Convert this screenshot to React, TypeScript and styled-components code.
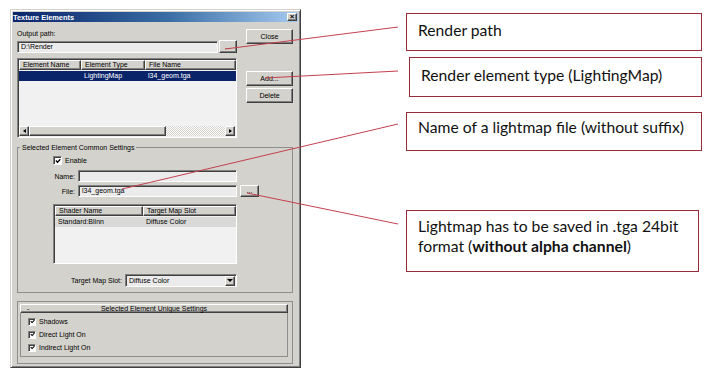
import React from "react";
import styled, { createGlobalStyle, css } from "styled-components";

const Global = createGlobalStyle`
  html, body { margin: 0; padding: 0; background: #fff; }
  body { width: 711px; height: 376px; overflow: hidden; font-family: "Liberation Sans", Arial, sans-serif; }
  *, *::before, *::after { box-sizing: border-box; }
`;

const BG = "#d4d2cc";

const raised = css`
  background: ${BG};
  border: 1px solid;
  border-color: #fff #404040 #404040 #fff;
  box-shadow: inset -1px -1px 0 #808080;
`;

const sunken = css`
  border: 1px solid;
  border-color: #808080 #fff #fff #808080;
  box-shadow: inset 1px 1px 0 #404040;
`;

const Page = styled.div`
  position: relative;
  width: 711px;
  height: 376px;
  display: flex;
  align-items: flex-start;
`;

const Dialog = styled.div`
  margin: 9px 0 0 10px;
  width: 291px;
  height: 359px;
  flex-shrink: 0;
  background: ${BG};
  border: 1px solid;
  border-color: ${BG} #404040 #404040 ${BG};
  box-shadow: inset 1px 1px 0 #fff, inset -1px -1px 0 #808080;
  padding: 2px;
  display: flex;
  flex-direction: column;
  font-size: 7px;
  color: #000;
`;

const TitleBar = styled.div`
  height: 10px;
  background: linear-gradient(90deg, #0a246a 0%, #3a6ea5 55%, #a6caf0 100%);
  color: #fff;
  font-weight: bold;
  font-size: 7.4px;
  display: flex;
  align-items: center;
  justify-content: space-between;
  padding: 0 1px 0 0;
`;

const CloseX = styled.div`
  ${raised};
  width: 10px;
  height: 8px;
  display: flex;
  align-items: center;
  justify-content: center;
  color: #000;
  font-size: 8px;
  line-height: 6px;
  font-weight: bold;
`;

const Body = styled.div`
  padding: 0 5px 0 4px;
  display: flex;
  flex-direction: column;
`;

const TopSection = styled.div`
  display: flex;
  gap: 9px;
`;

const LeftCol = styled.div`
  width: 220px;
  display: flex;
  flex-direction: column;
`;

const RightCol = styled.div`
  width: 47px;
  display: flex;
  flex-direction: column;
`;

const Label = styled.div<{ $mt?: number }>`
  margin-top: ${(p) => p.$mt ?? 0}px;
  height: 9px;
  line-height: 9px;
  white-space: nowrap;
`;

const Row = styled.div<{ $mt?: number; $h?: number }>`
  margin-top: ${(p) => p.$mt ?? 0}px;
  height: ${(p) => p.$h ?? 12}px;
  display: flex;
  align-items: center;
`;

const Field = styled.div<{ $w: number; $h?: number }>`
  ${sunken};
  width: ${(p) => p.$w}px;
  height: ${(p) => p.$h ?? 12}px;
  background: #ebebeb;
  padding-left: 3px;
  line-height: 10px;
  white-space: nowrap;
  overflow: hidden;
  flex-shrink: 0;
`;

const Button = styled.div<{ $mt?: number; $w?: number; $h?: number; $ml?: number }>`
  ${raised};
  margin-top: ${(p) => p.$mt ?? 0}px;
  margin-left: ${(p) => p.$ml ?? 0}px;
  width: ${(p) => (p.$w ? `${p.$w}px` : "100%")};
  height: ${(p) => p.$h ?? 15}px;
  display: flex;
  align-items: center;
  justify-content: center;
  flex-shrink: 0;
  line-height: 8px;
`;

const ListBox = styled.div<{ $w: number; $h: number; $mt?: number }>`
  ${sunken};
  margin-top: ${(p) => p.$mt ?? 0}px;
  width: ${(p) => p.$w}px;
  height: ${(p) => p.$h}px;
  padding: 1px 0 0 1px;
  background: #f1f1f1;
  display: flex;
  flex-direction: column;
  overflow: hidden;
  flex-shrink: 0;
`;

const HeaderRow = styled.div`
  display: flex;
  height: 10px;
  flex-shrink: 0;
`;

const HeaderCell = styled.div<{ $w?: number }>`
  ${raised};
  width: ${(p) => (p.$w ? `${p.$w}px` : "auto")};
  flex: ${(p) => (p.$w ? "0 0 auto" : "1 1 auto")};
  padding-left: 3px;
  line-height: 8px;
  white-space: nowrap;
  overflow: hidden;
`;

const ItemRow = styled.div<{ $bg?: string; $fg?: string }>`
  display: flex;
  height: 10px;
  margin-top: 1px;
  background: ${(p) => p.$bg ?? "transparent"};
  color: ${(p) => p.$fg ?? "#000"};
  flex-shrink: 0;
`;

const Cell = styled.div<{ $w?: number }>`
  width: ${(p) => (p.$w ? `${p.$w}px` : "auto")};
  flex: ${(p) => (p.$w ? "0 0 auto" : "1 1 auto")};
  padding-left: 3px;
  line-height: 10px;
  white-space: nowrap;
  overflow: hidden;
`;

const Spacer = styled.div`
  flex: 1;
`;

const ScrollBar = styled.div`
  display: flex;
  height: 10px;
  flex-shrink: 0;
  margin-right: 1px;
  margin-bottom: 1px;
`;

const ArrowBtn = styled.div`
  ${raised};
  width: 10px;
  height: 10px;
  display: flex;
  align-items: center;
  justify-content: center;
  flex-shrink: 0;
`;

const Tri = styled.div<{ $dir: "left" | "right" | "down" }>`
  width: 0;
  height: 0;
  ${(p) =>
    p.$dir === "left"
      ? css`border-top: 2.5px solid transparent; border-bottom: 2.5px solid transparent; border-right: 3px solid #000;`
      : p.$dir === "right"
      ? css`border-top: 2.5px solid transparent; border-bottom: 2.5px solid transparent; border-left: 3px solid #000;`
      : css`border-left: 3px solid transparent; border-right: 3px solid transparent; border-top: 3px solid #000;`}
`;

const Thumb = styled.div`
  ${raised};
  width: 137px;
  height: 10px;
  flex-shrink: 0;
`;

const Track = styled.div`
  flex: 1;
  height: 10px;
  background-image: conic-gradient(#fff 25%, ${BG} 0 50%, #fff 0 75%, ${BG} 0);
  background-size: 2px 2px;
`;

const Group = styled.fieldset`
  margin: 5px 0 0 0;
  padding: 0 0 5px 0;
  border: 1px solid #8e8e8e;
  min-inline-size: 0;
  width: 276px;
`;

const Legend = styled.legend`
  padding: 0 2px;
  margin-left: 2px;
  font-size: 7px;
  line-height: 9px;
  height: 9px;
`;

const GroupContent = styled.div`
  padding-left: 35px;
  display: flex;
  flex-direction: column;
`;

const CheckRow = styled.div<{ $mt?: number; $h?: number }>`
  margin-top: ${(p) => p.$mt ?? 0}px;
  height: ${(p) => p.$h ?? 9}px;
  display: flex;
  align-items: center;
  gap: 3px;
  white-space: nowrap;
`;

const CheckBox = styled.div<{ $s?: number }>`
  ${sunken};
  width: ${(p) => p.$s ?? 9}px;
  height: ${(p) => p.$s ?? 9}px;
  background: #fff;
  display: flex;
  align-items: center;
  justify-content: center;
  flex-shrink: 0;
`;

const FieldLabel = styled.div<{ $w: number }>`
  width: ${(p) => p.$w}px;
  text-align: right;
  margin-right: 3px;
  white-space: nowrap;
  flex-shrink: 0;
`;

const Combo = styled.div`
  ${sunken};
  width: 112px;
  height: 13px;
  background: #ebebeb;
  display: flex;
  align-items: center;
  padding: 0 1px 0 3px;
`;

const ComboText = styled.div`
  flex: 1;
  line-height: 10px;
  white-space: nowrap;
`;

const ComboBtn = styled.div`
  ${raised};
  width: 10px;
  height: 10px;
  display: flex;
  align-items: center;
  justify-content: center;
`;

const Rollout = styled.div`
  margin-top: 8px;
  width: 276px;
  height: 63px;
  border: 1px solid #8e8e8e;
  padding: 2px 4px 0 2px;
  display: flex;
  flex-direction: column;
`;

const RolloutHead = styled.div`
  ${raised};
  height: 9px;
  display: flex;
  align-items: center;
  line-height: 7px;
  padding: 0 6px;
`;

const RolloutSign = styled.div`
  width: 6px;
`;

const RolloutTitle = styled.div`
  flex: 1;
  text-align: center;
  padding-right: 6px;
  white-space: nowrap;
`;

const RolloutBody = styled.div`
  height: 44px;
  border: 1px solid #8e8e8e;
  border-top: none;
  padding: 2px 0 0 7px;
  display: flex;
  flex-direction: column;
`;

const Notes = styled.div`
  margin: 13px 0 0 105px;
  display: flex;
  flex-direction: column;
`;

const Note = styled.div<{ $w: number; $h: number; $mt: number; $ml?: number; $pt: number }>`
  width: ${(p) => p.$w}px;
  height: ${(p) => p.$h}px;
  margin-top: ${(p) => p.$mt}px;
  margin-left: ${(p) => p.$ml ?? 0}px;
  padding: ${(p) => p.$pt}px 0 0 11px;
  border: 1px solid #962b3a;
  font-family: Lato, "Open Sans", sans-serif;
  font-size: 15.7px;
  line-height: 20px;
  color: #111;
  white-space: nowrap;
`;

const Leaders = styled.svg`
  position: absolute;
  left: 0;
  top: 0;
  pointer-events: none;
`;

const Check = ({ s = 9 }: { s?: number }) => (
  <CheckBox $s={s}>
    <svg width={s - 3} height={s - 3} viewBox="0 0 7 7">
      <path d="M1 3 L3 5 L6.2 1.5" fill="none" stroke="#000" strokeWidth="1.5" />
    </svg>
  </CheckBox>
);

export default function App() {
  return (
    <>
      <Global />
      <Page>
        <Dialog>
          <TitleBar>
            <span>Texture Elements</span>
            <CloseX>×</CloseX>
          </TitleBar>
          <Body>
            <TopSection>
              <LeftCol>
                <Label $mt={7}>Output path:</Label>
                <Row $mt={2} $h={13}>
                  <Field $w={201}>D:\Render</Field>
                  <Button $w={18} $h={13} $ml={1}>...</Button>
                </Row>
                <ListBox $w={220} $h={80} $mt={5}>
                  <HeaderRow>
                    <HeaderCell $w={62}>Element Name</HeaderCell>
                    <HeaderCell $w={64}>Element Type</HeaderCell>
                    <HeaderCell>File Name</HeaderCell>
                  </HeaderRow>
                  <ItemRow $bg="#0a246a" $fg="#fff">
                    <Cell $w={62}></Cell>
                    <Cell $w={64}>LightingMap</Cell>
                    <Cell>l34_geom.tga</Cell>
                  </ItemRow>
                  <Spacer />
                  <ScrollBar>
                    <ArrowBtn><Tri $dir="left" /></ArrowBtn>
                    <Thumb />
                    <Track />
                    <ArrowBtn><Tri $dir="right" /></ArrowBtn>
                  </ScrollBar>
                </ListBox>
              </LeftCol>
              <RightCol>
                <Button $mt={7}>Close</Button>
                <Button $mt={27}>Add...</Button>
                <Button $mt={2}>Delete</Button>
              </RightCol>
            </TopSection>

            <Group>
              <Legend>Selected Element Common Settings</Legend>
              <GroupContent>
                <CheckRow $mt={4}>
                  <Check />
                  <span>Enable</span>
                </CheckRow>
                <Row $mt={5}>
                  <FieldLabel $w={22}>Name:</FieldLabel>
                  <Field $w={159}></Field>
                </Row>
                <Row $mt={3}>
                  <FieldLabel $w={22}>File:</FieldLabel>
                  <Field $w={159}>l34_geom.tga</Field>
                  <Button $w={19} $h={12} $ml={3}>...</Button>
                </Row>
                <ListBox $w={184} $h={60} $mt={7}>
                  <HeaderRow>
                    <HeaderCell $w={88}>Shader Name</HeaderCell>
                    <HeaderCell>Target Map Slot</HeaderCell>
                  </HeaderRow>
                  <ItemRow $bg="#d9d9d7">
                    <Cell $w={88}>Standard:Blinn</Cell>
                    <Cell>Diffuse Color</Cell>
                  </ItemRow>
                </ListBox>
                <Row $mt={10} $h={13}>
                  <FieldLabel $w={69}>Target Map Slot:</FieldLabel>
                  <Combo>
                    <ComboText>Diffuse Color</ComboText>
                    <ComboBtn><Tri $dir="down" /></ComboBtn>
                  </Combo>
                </Row>
              </GroupContent>
            </Group>

            <Rollout>
              <RolloutHead>
                <RolloutSign>-</RolloutSign>
                <RolloutTitle>Selected Element Unique Settings</RolloutTitle>
              </RolloutHead>
              <RolloutBody>
                <CheckRow $h={13}>
                  <Check s={8} />
                  <span>Shadows</span>
                </CheckRow>
                <CheckRow $h={13}>
                  <Check s={8} />
                  <span>Direct Light On</span>
                </CheckRow>
                <CheckRow $h={13}>
                  <Check s={8} />
                  <span>Indirect Light On</span>
                </CheckRow>
              </RolloutBody>
            </Rollout>
          </Body>
        </Dialog>

        <Notes>
          <Note $w={296} $h={38} $mt={0} $pt={6}>Render path</Note>
          <Note $w={293} $h={40} $mt={6} $ml={3} $pt={7}>Render element type (LightingMap)</Note>
          <Note $w={296} $h={39} $mt={15} $pt={4}>Name of a lightmap file (without suffix)</Note>
          <Note $w={293} $h={62} $mt={59} $pt={5}>
            Lightmap has to be saved in .tga 24bit
            <br />
            format (<b>without alpha channel</b>)
          </Note>
        </Notes>

        <Leaders width={711} height={376} viewBox="0 0 711 376">
          <g stroke="#c2414f" strokeWidth="1" fill="none">
            <line x1={225} y1={49} x2={398} y2={27} />
            <line x1={265} y1={78} x2={398} y2={71} />
            <line x1={122} y1={189} x2={398} y2={124} />
            <line x1={247} y1={193} x2={398} y2={224} />
          </g>
        </Leaders>
      </Page>
    </>
  );
}
